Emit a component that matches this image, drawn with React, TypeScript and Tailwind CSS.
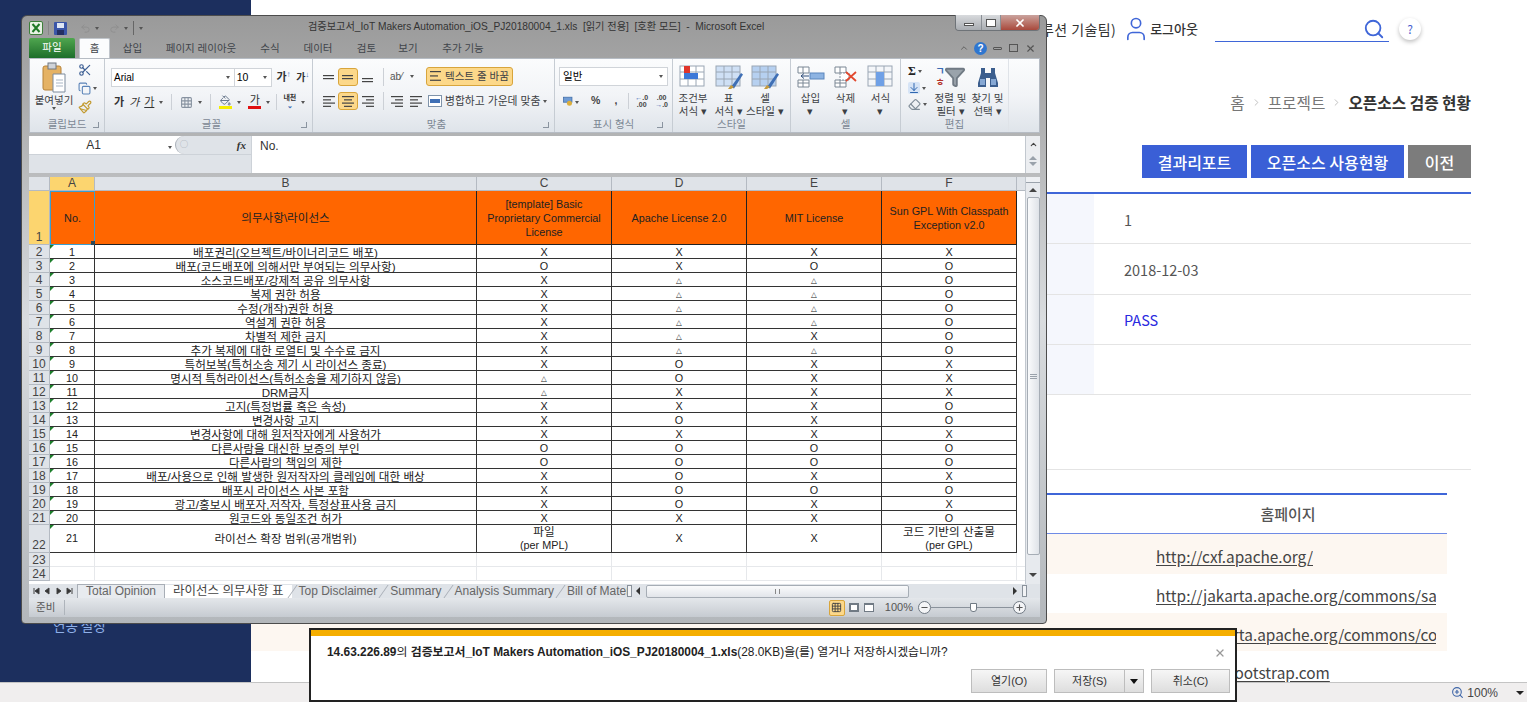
import { Search, User, Scissors, Copy, Paintbrush, PaintBucket, Grid3x3, Undo2, Redo2, ChevronUp, ChevronRight, X, Minus, Plus, Filter, Eraser, ArrowDownToLine, ZoomIn } from 'lucide-react';

const rows: [string, string, string, string, string][] = [
  ['배포권리(오브젝트/바이너리코드 배포)', 'X', 'X', 'X', 'X'],
  ['배포(코드배포에 의해서만 부여되는 의무사항)', 'O', 'X', 'O', 'O'],
  ['소스코드배포/강제적 공유 의무사항', 'X', '△', '△', 'O'],
  ['복제 권한 허용', 'X', '△', '△', 'O'],
  ['수정(개작)권한 허용', 'X', '△', '△', 'O'],
  ['역설계 권한 허용', 'X', '△', '△', 'O'],
  ['차별적 제한 금지', 'X', '△', 'X', 'O'],
  ['추가 복제에 대한 로열티 및 수수료 금지', 'X', '△', '△', 'O'],
  ['특허보복(특허소송 제기 시 라이선스 종료)', 'X', 'O', 'X', 'X'],
  ['명시적 특허라이선스(특허소송을 제기하지 않음)', '△', 'O', 'X', 'X'],
  ['DRM금지', '△', 'X', 'X', 'X'],
  ['고지(특정법률 혹은 속성)', 'X', 'X', 'X', 'O'],
  ['변경사항 고지', 'X', 'O', 'X', 'O'],
  ['변경사항에 대해 원저작자에게 사용허가', 'X', 'X', 'X', 'X'],
  ['다른사람을 대신한 보증의 부인', 'O', 'O', 'O', 'O'],
  ['다른사람의 책임의 제한', 'O', 'O', 'O', 'O'],
  ['배포/사용으로 인해 발생한 원저작자의 클레임에 대한 배상', 'X', 'O', 'X', 'X'],
  ['배포시 라이선스 사본 포함', 'X', 'O', 'O', 'O'],
  ['광고/홍보시 배포자,저작자, 특정상표사용 금지', 'X', 'O', 'X', 'X'],
  ['원코드와 동일조건 허가', 'X', 'X', 'X', 'O'],
];

const ribbonTabs = [
  { label: '삽입', w: 'w-[45px]' },
  { label: '페이지 레이아웃', w: 'w-[92px]' },
  { label: '수식', w: 'w-[46px]' },
  { label: '데이터', w: 'w-[50px]' },
  { label: '검토', w: 'w-[47px]' },
  { label: '보기', w: 'w-[36px]' },
  { label: '추가 기능', w: 'w-[74px]' },
];

const links = [
  { url: 'http://cxf.apache.org/', bg: 'bg-[#fdf7f1]', h: 'h-[40px]' },
  { url: 'http://jakarta.apache.org/commons/sandbox/', bg: 'bg-white', h: 'h-[39px]' },
  { url: 'http://jakarta.apache.org/commons/compress/', bg: 'bg-[#fdf7f1]', h: 'h-[38px]' },
  { url: 'http://getbootstrap.com', bg: 'bg-white', h: 'h-[38px]' },
];

function Caret() {
  return <span className="inline-block h-0 w-0 border-x-[2.5px] border-t-[3px] border-x-transparent border-t-[#555]" />;
}

function Lines({ widths, align = 'left', h = 13 }: { widths: number[]; align?: 'left' | 'center' | 'right'; h?: number }) {
  const gap = h / widths.length;
  return (
    <svg width="14" height={h} viewBox={`0 0 14 ${h}`}>
      {widths.map((w, i) => {
        const x = align === 'left' ? 1 : align === 'right' ? 13 - w : 7 - w / 2;
        return <rect key={i} x={x} y={i * gap + 1} width={w} height="1.2" fill="#444" />;
      })}
    </svg>
  );
}

function SheetIcon({ tint, accent }: { tint: string; accent?: 'red' | 'brush' | 'sel' }) {
  return (
    <svg width="28" height="24" viewBox="0 0 28 24">
      <rect x="1" y="1" width="24" height="20" fill={tint} stroke="#9aa6b4" />
      <path d="M1 7h24M1 14h24M9 1v20M17 1v20" stroke="#9aa6b4" fill="none" />
      {accent === 'red' && <rect x="5" y="1" width="6" height="13" fill="#e0352b" />}
      {accent === 'red' && <rect x="5" y="8" width="14" height="6" fill="#3c78d8" />}
      {accent === 'brush' && <path d="M16 22l10-14 2 1.5-9 14z" fill="#3f6fb5" />}
      {accent === 'brush' && <path d="M13 24l3-4 3 2-3 2z" fill="#c49a3c" />}
      {accent === 'sel' && <rect x="9" y="7" width="8" height="14" fill="#6fa0e6" />}
    </svg>
  );
}

function InsertIcon() {
  return (
    <svg width="28" height="24" viewBox="0 0 28 24">
      <path d="M1 2h11v6H1zM1 15h11v7H1zM6 2v6M6 15v7M1 18h11" fill="#fff" stroke="#7a8794" />
      <rect x="13" y="8" width="14" height="6" fill="#8db3e2" stroke="#5b86bd" />
      <path d="M12 11H4m3-2.5L4 11l3 2.5" stroke="#33517c" fill="none" />
    </svg>
  );
}

function DeleteIcon() {
  return (
    <svg width="28" height="24" viewBox="0 0 28 24">
      <path d="M3 2h11v6H3zM3 15h11v7H3zM8 2v6M8 15v7M3 18h11" fill="#fff" stroke="#7a8794" />
      <rect x="8" y="8" width="9" height="7" fill="#fff" stroke="#8a94a0" strokeDasharray="2 1" />
      <path d="M14 7l10 9M24 7l-10 9" stroke="#e2492f" strokeWidth="1.8" />
    </svg>
  );
}

function Binoculars() {
  return (
    <svg width="24" height="24" viewBox="0 0 24 24">
      <path d="M5 3h4v5h6V3h4v5l3 10v4h-8v-9h-4v9H2v-4L5 8z" fill="#3b5e8e" />
      <path d="M4 14h5v6H4zM15 14h5v6h-5z" fill="#86a8d4" />
    </svg>
  );
}

function GroupLabel({ label, launcher = true }: { label: string; launcher?: boolean }) {
  return (
    <div className="relative mt-auto flex h-[14px] items-center justify-center text-[10.5px] text-[#7c8794]">
      {label}
      {launcher && <span className="absolute right-[5px] top-[4px] h-[6px] w-[6px] border-b border-r border-[#8a94a0]" />}
    </div>
  );
}

function BigButton({ icon, lines, w }: { icon: React.ReactNode; lines: string[]; w: string }) {
  return (
    <div className={`flex flex-col items-center ${w}`}>
      <div className="flex h-[30px] items-center">{icon}</div>
      <div className="text-center text-[10.5px] leading-[13px] text-[#3c3f44] whitespace-nowrap">
        {lines.map((l, i) => <div key={i}>{l}</div>)}
      </div>
    </div>
  );
}

function Ribbon() {
  return (
    <div className="flex h-[75px] border border-[#b6bcc4] bg-linear-to-b from-[#fbfcfd] via-[#f2f4f7] to-[#dfe4ea]">
      {/* clipboard */}
      <div className="flex w-[75px] flex-col border-r border-[#c6ccd3]">
        <div className="flex pt-[3px]">
          <div className="flex w-[48px] flex-col items-center">
            <svg width="24" height="32" viewBox="0 0 24 32">
              <rect x="1" y="4" width="18" height="24" rx="2" fill="#e5b264" stroke="#b68238" />
              <rect x="6" y="1" width="8" height="6" fill="#cfd3d8" stroke="#6f7780" />
              <path d="M11 12h12v18H11z" fill="#fff" stroke="#7c8b9c" />
              <path d="M14 18h7M14 21h7M14 24h7" stroke="#a9b6c5" />
            </svg>
            <div className="text-[10.5px] leading-[13px] text-[#3c3f44] whitespace-nowrap">붙여넣기</div>
            <Caret />
          </div>
          <div className="flex flex-col gap-[5px] pt-[1px]">
            <Scissors size={14} className="text-[#3d5f94]" />
            <div className="flex items-center gap-[2px]"><Copy size={13} className="text-[#5a83b8]" /><Caret /></div>
            <Paintbrush size={14} className="text-[#c29a2e]" />
          </div>
        </div>
        <GroupLabel label="클립보드" />
      </div>
      {/* font */}
      <div className="flex w-[208px] flex-col border-r border-[#c6ccd3] pl-[6px] pt-[9px]">
        <div className="flex items-center">
          <div className="flex h-[19px] w-[125px] items-center justify-between border border-[#d0d4d9] bg-white pl-[2px] pr-[4px] text-[10px]">Arial<Caret /></div>
          <div className="flex h-[19px] w-[38px] items-center justify-between border border-l-0 border-[#d0d4d9] bg-white pl-[2px] pr-[4px] text-[10.5px]">10<Caret /></div>
          <span className="ml-[4px] w-[20px] text-[11px] font-bold text-[#333]">가<sup className="text-[#3c6cb4]">↑</sup></span>
          <span className="w-[16px] text-[10px] font-bold text-[#333]">가<sup className="text-[#3c6cb4]">↓</sup></span>
        </div>
        <div className="mt-[7px] flex items-center gap-[5px] pl-[3px] text-[11px] text-[#333]">
          <span className="font-bold">가</span>
          <span className="italic">가</span>
          <span className="underline">가</span><Caret />
          <span className="mx-[3px] h-[16px] border-l border-[#ccd0d6]" />
          <Grid3x3 size={13} className="text-[#8792a0]" /><Caret />
          <span className="mx-[3px] h-[16px] border-l border-[#ccd0d6]" />
          <div className="flex flex-col items-center"><PaintBucket size={11} className="text-[#5d6d82]" /><span className="h-[3px] w-[13px] bg-[#f6ee00]" /></div><Caret />
          <div className="ml-[2px] flex flex-col items-center leading-[11px]"><span>가</span><span className="h-[3px] w-[13px] bg-[#e01010]" /></div><Caret />
          <span className="mx-[1px] h-[16px] border-l border-[#ccd0d6]" />
          <span className="text-center text-[7px] leading-[8px] font-bold">내천<br /><span className="text-[#3c6cb4]">⌄</span></span><Caret />
        </div>
        <GroupLabel label="글꼴" />
      </div>
      {/* alignment */}
      <div className="flex w-[242px] flex-col border-r border-[#c6ccd3] pl-[6px] pt-[8px]">
        <div className="flex items-center">
          <div className="flex h-[18px] w-[19px] items-center justify-center"><Lines widths={[11, 11]} h={6} /></div>
          <div className="flex h-[18px] w-[20px] items-center justify-center rounded-[3px] border border-[#d8a53c] bg-[#fcd88a]"><Lines widths={[11, 11]} h={6} /></div>
          <div className="flex h-[18px] w-[19px] items-center justify-center pt-[6px]"><Lines widths={[11, 11]} h={6} /></div>
          <span className="mx-[6px] h-[18px] border-l border-[#ccd0d6]" />
          <span className="w-[20px] text-[10px] text-[#555]">ab⁄</span><Caret />
          <div className="ml-[12px] flex h-[19px] w-[87px] items-center gap-[2px] rounded-[3px] border border-[#d8a53c] bg-[#fcd88a] pl-[2px] text-[10.5px] whitespace-nowrap text-[#3c3f44]">
            <Lines widths={[11, 8, 11]} />텍스트 줄 바꿈
          </div>
        </div>
        <div className="mt-[6px] flex items-center">
          <div className="flex h-[18px] w-[19px] items-center justify-center"><Lines widths={[12, 8, 12, 8]} /></div>
          <div className="flex h-[18px] w-[20px] items-center justify-center rounded-[3px] border border-[#d8a53c] bg-[#fcd88a]"><Lines widths={[12, 8, 12, 8]} align="center" /></div>
          <div className="flex h-[18px] w-[19px] items-center justify-center"><Lines widths={[12, 8, 12, 8]} align="right" /></div>
          <span className="mx-[6px] h-[18px] border-l border-[#ccd0d6]" />
          <Lines widths={[12, 8, 12, 8]} align="right" />
          <span className="w-[5px]" />
          <Lines widths={[12, 8, 12, 8]} align="left" />
          <div className="ml-[5px] flex items-center gap-[3px] text-[10.8px] whitespace-nowrap text-[#3c3f44]">
            <svg width="14" height="12" viewBox="0 0 14 12"><rect x="0.5" y="0.5" width="13" height="11" fill="#fff" stroke="#7f93aa" /><rect x="2" y="4" width="10" height="4" fill="#3f6fb5" /></svg>
            병합하고 가운데 맞춤 <Caret />
          </div>
        </div>
        <GroupLabel label="맞춤" />
      </div>
      {/* number */}
      <div className="flex w-[118px] flex-col border-r border-[#c6ccd3] px-[4px] pt-[8px]">
        <div className="flex h-[19px] items-center justify-between border border-[#d0d4d9] bg-white pl-[3px] pr-[4px] text-[10.5px]">일반<Caret /></div>
        <div className="mt-[7px] flex items-center pl-[4px] text-[10.5px] font-bold text-[#444]">
          <svg width="14" height="13" viewBox="0 0 14 13"><rect x="0.5" y="0.5" width="12" height="7" fill="#6f9bd4" stroke="#3d6aa5" /><circle cx="9" cy="9" r="3.5" fill="#dcae3c" /></svg>
          <span className="ml-[2px]"><Caret /></span>
          <span className="ml-[12px]">%</span>
          <span className="ml-[14px]">,</span>
          <span className="ml-[11px] h-[16px] border-l border-[#ccd0d6]" />
          <span className="ml-[6px] text-center text-[7px] leading-[7px]"><span className="text-[#3c6cb4]">←</span>.0<br />.00</span>
          <span className="ml-[7px] text-center text-[7px] leading-[7px]">.00<br /><span className="text-[#3c6cb4]">→</span>.0</span>
        </div>
        <GroupLabel label="표시 형식" />
      </div>
      {/* style */}
      <div className="flex w-[118px] flex-col border-r border-[#c6ccd3] pt-[3px]">
        <div className="flex pl-[2px]">
          <BigButton w="w-[36px]" icon={<SheetIcon tint="#fff" accent="red" />} lines={['조건부', '서식 ▾']} />
          <BigButton w="w-[35px]" icon={<SheetIcon tint="#cfe0f5" accent="brush" />} lines={['표', '서식 ▾']} />
          <BigButton w="w-[38px]" icon={<SheetIcon tint="#b6d0f0" accent="brush" />} lines={['셀', '스타일 ▾']} />
        </div>
        <GroupLabel label="스타일" launcher={false} />
      </div>
      {/* cells */}
      <div className="flex w-[110px] flex-col border-r border-[#c6ccd3] pt-[3px]">
        <div className="flex justify-center">
          <BigButton w="w-[35px]" icon={<InsertIcon />} lines={['삽입', '▾']} />
          <BigButton w="w-[35px]" icon={<DeleteIcon />} lines={['삭제', '▾']} />
          <BigButton w="w-[35px]" icon={<SheetIcon tint="#f4f6f9" accent="sel" />} lines={['서식', '▾']} />
        </div>
        <GroupLabel label="셀" launcher={false} />
      </div>
      {/* editing */}
      <div className="flex w-[108px] flex-col border-r border-[#dfe3e8] pt-[3px]">
        <div className="flex pl-[7px]">
          <div className="flex w-[24px] flex-col gap-[4px] pt-[2px] text-[#222]">
            <div className="flex items-center gap-[2px] font-['Liberation_Serif',serif] text-[12px] leading-[14px] font-bold">Σ<Caret /></div>
            <div className="flex items-center gap-[2px]"><ArrowDownToLine size={12} className="rounded-[2px] bg-[#d6e4f6] text-[#2e66b0]" /><Caret /></div>
            <div className="flex items-center gap-[2px]"><Eraser size={13} className="text-[#7d8a96]" /><Caret /></div>
          </div>
          <BigButton w="w-[37px]" icon={<div className="flex items-center"><span className="text-[10px] leading-[11px] font-bold"><span className="text-[#3c6cb4]">ㄱ</span><br /><span className="text-[#b3322a]">ㅎ</span></span><Filter size={22} fill="#9aa3ab" className="-ml-[1px] text-[#707a84]" /></div>} lines={['정렬 및', '필터 ▾']} />
          <BigButton w="w-[37px]" icon={<Binoculars />} lines={['찾기 및', '선택 ▾']} />
        </div>
        <GroupLabel label="편집" launcher={false} />
      </div>
    </div>
  );
}

function GreenMark() {
  return <span className="absolute left-0 top-0 h-0 w-0 border-r-[4px] border-t-[4px] border-r-transparent border-t-[#1c7f2b]" />;
}

function Mark({ v }: { v: string }) {
  if (v === '△') return <span className="block h-[11px] overflow-hidden font-['DejaVu_Sans',sans-serif] text-[7.5px] leading-[12px] font-bold text-[#222]">{v}</span>;
  return <>{v}</>;
}

function Sheet() {
  const cols = ['A', 'B', 'C', 'D', 'E', 'F'];
  return (
    <div className="flex h-[407px]">
      <div className="w-[996px] overflow-hidden bg-white">
        <table className="w-[996px] table-fixed border-separate border-spacing-0 text-center text-[10.8px] text-[#222]">
          <colgroup>
            <col className="w-[21px]" /><col className="w-[45px]" /><col className="w-[382px]" />
            <col className="w-[135px]" /><col className="w-[135px]" /><col className="w-[135px]" /><col className="w-[135px]" /><col className="w-[8px]" />
          </colgroup>
          <thead>
            <tr className="h-[14px] text-[12px] leading-[13px] text-[#444]">
              <th className="border-b border-r border-[#b4bac2] bg-[#dfe3e8] p-0" />
              {cols.map(c => (
                <th key={c} className={`border-b border-r border-[#b4bac2] p-0 font-normal ${c === 'A' ? 'bg-[#fcd56f]' : 'bg-[#dfe3e8]'}`}>{c}</th>
              ))}
              <th className="border-b border-[#b4bac2] bg-[#dfe3e8] p-0" />
            </tr>
          </thead>
          <tbody>
            <tr className="h-[54px] leading-[14px]">
              <td className="border-b border-r border-[#b4bac2] bg-[#fcd56f] p-0 align-bottom text-[12px] text-[#444]">1</td>
              <td className="relative border border-[#3a9fd0] bg-[#ff6600] p-0">
                No.
                <span className="absolute bottom-[-1px] right-[-1px] h-[4px] w-[4px] bg-[#2a4a5a]" />
              </td>
              <td className="border-b border-r border-[#222] bg-[#ff6600] p-0 text-[11.6px]">의무사항\라이선스</td>
              <td className="border-b border-r border-[#222] bg-[#ff6600] p-0">[template] Basic<br />Proprietary Commercial<br />License</td>
              <td className="border-b border-r border-[#222] bg-[#ff6600] p-0">Apache License 2.0</td>
              <td className="border-b border-r border-[#222] bg-[#ff6600] p-0">MIT License</td>
              <td className="border-b border-r border-[#222] bg-[#ff6600] p-0">Sun GPL With Classpath<br />Exception v2.0</td>
              <td />
            </tr>
            {rows.map((r, i) => (
              <tr key={i} className="h-[14px] leading-[11px]">
                <td className="border-b border-r border-[#b4bac2] bg-[#dfe3e8] p-0 text-[12px] leading-[12px] text-[#444]">{i + 2}</td>
                <td className="relative border-b border-r border-[#333] p-0 pt-[1px]">
                  <GreenMark />
                  {i + 1}
                </td>
                <td className="border-b border-r border-[#333] p-0 pt-[1px] text-[11.6px] whitespace-nowrap">{r[0]}</td>
                {r.slice(1).map((v, j) => (
                  <td key={j} className="border-b border-r border-[#333] p-0 pt-[1px]"><Mark v={v} /></td>
                ))}
                <td />
              </tr>
            ))}
            <tr className="h-[28px] leading-[13px]">
              <td className="border-b border-r border-[#b4bac2] bg-[#dfe3e8] p-0 align-bottom text-[12px] text-[#444]">22</td>
              <td className="relative border-b border-r border-[#333] p-0">
                <GreenMark />
                21
              </td>
              <td className="border-b border-r border-[#333] p-0 text-[11.6px]">라이선스 확장 범위(공개범위)</td>
              <td className="border-b border-r border-[#333] p-0"><span className="text-[11.6px]">파일</span><br />(per MPL)</td>
              <td className="border-b border-r border-[#333] p-0">X</td>
              <td className="border-b border-r border-[#333] p-0">X</td>
              <td className="border-b border-r border-[#333] p-0"><span className="text-[11.6px]">코드 기반의 산출물</span><br />(per GPL)</td>
              <td />
            </tr>
            {[23, 24].map(n => (
              <tr key={n} className="h-[14px] leading-[12px]">
                <td className="border-b border-r border-[#b4bac2] bg-[#dfe3e8] p-0 text-[12px] text-[#444]">{n}</td>
                {[0, 1, 2, 3, 4, 5].map(j => <td key={j} className="border-b border-r border-[#e6e8eb] p-0" />)}
                <td className="border-b border-[#e6e8eb]" />
              </tr>
            ))}
          </tbody>
        </table>
      </div>
      {/* vertical scrollbar */}
      <div className="flex w-[15px] flex-col items-center border-l border-[#c2c8cf] bg-[#e7eaee]">
        <div className="h-[6px] w-full border-b border-[#9aa2ab] bg-[#eef0f3]" />
        <div className="flex h-[14px] items-center"><span className="h-0 w-0 border-x-[4px] border-b-[4px] border-x-transparent border-b-[#444]" /></div>
        <div className="flex h-[358px] w-[13px] flex-col items-center justify-center gap-[1px] rounded-[2px] border border-[#a6adb5] bg-linear-to-r from-[#fafbfc] to-[#dfe3e8]">
          <span className="w-[7px] border-t border-[#9aa2ab]" /><span className="w-[7px] border-t border-[#9aa2ab]" /><span className="w-[7px] border-t border-[#9aa2ab]" />
        </div>
        <div className="mt-auto flex h-[14px] items-center pb-[4px]"><span className="h-0 w-0 border-x-[4px] border-t-[4px] border-x-transparent border-t-[#444]" /></div>
      </div>
    </div>
  );
}

function TabSlant() {
  return <span className="h-[13px] w-0 shrink-0 skew-x-[-35deg] border-l border-[#a8aeb6]" />;
}

function SheetTabs() {
  return (
    <div className="flex h-[14px] items-end bg-[#dfe3e8] text-[12px] leading-[13px] text-[#666]">
      <svg width="48" height="10" viewBox="0 0 48 10" className="shrink-0 self-center">
        <path d="M5 2v6M10 2L6 5l4 3zM20 2l-4 3 4 3zM28 2l4 3-4 3zM38 2l4 3-4 3zM43 2v6" stroke="#444" fill="#333" />
      </svg>
      <div className="flex w-[550px] items-end overflow-hidden whitespace-nowrap">
        <span className="border border-b-0 border-[#a8aeb6] bg-[#e8ebef] px-[8px]">Total Opinion</span>
        <span className="bg-white px-[8px] text-[12.5px] text-[#444]">라이선스 의무사항 표</span>
        <TabSlant />
        <span className="px-[6px]">Top Disclaimer</span>
        <TabSlant />
        <span className="px-[6px]">Summary</span>
        <TabSlant />
        <span className="px-[6px]">Analysis Summary</span>
        <TabSlant />
        <span className="pl-[6px]">Bill of Materials</span>
      </div>
      <span className="h-[12px] w-[5px] self-center border border-[#8a929b] bg-[#f2f3f5]" />
      {/* horizontal scrollbar */}
      <div className="ml-[4px] flex flex-1 items-center self-center pr-[13px]">
        <span className="h-0 w-0 border-y-[4px] border-r-[4px] border-y-transparent border-r-[#333]" />
        <div className="ml-[6px] flex h-[13px] w-[263px] items-center justify-center rounded-[2px] border border-[#a6adb5] bg-linear-to-b from-[#fafbfc] to-[#e2e5ea]">
          <span className="h-[5px] w-[5px] border-x border-[#888]" />
        </div>
        <span className="ml-auto h-0 w-0 border-y-[4px] border-l-[4px] border-y-transparent border-l-[#333]" />
        <span className="ml-[5px] h-[12px] w-[5px] border border-[#8a929b] bg-[#f2f3f5]" />
      </div>
    </div>
  );
}

function StatusBar() {
  return (
    <div className="flex h-[19px] items-center bg-linear-to-b from-[#e4e7eb] to-[#c6cbd1] text-[10.5px] text-[#555]">
      <span className="border-r border-[#aeb4bb] pl-[7px] pr-[9px]">준비</span>
      <div className="ml-auto flex items-center">
        <div className="flex h-[16px] w-[16px] items-center justify-center rounded-[2px] border border-[#d8a53c] bg-[#fcd88a]"><Grid3x3 size={11} className="text-[#444]" /></div>
        <div className="ml-[2px] flex h-[16px] w-[14px] items-center justify-center"><span className="h-[9px] w-[10px] border-2 border-[#707a84] bg-white" /></div>
        <div className="ml-[1px] flex h-[16px] w-[14px] items-center justify-center"><span className="h-[9px] w-[10px] border border-t-2 border-[#707a84] bg-white" /></div>
        <span className="ml-[9px] font-['Liberation_Sans',sans-serif] text-[11px]">100%</span>
        <span className="ml-[5px] flex h-[13px] w-[13px] items-center justify-center rounded-full border border-[#707a84] bg-[#f4f5f7]"><Minus size={9} strokeWidth={3} /></span>
        <div className="relative flex w-[82px] items-center">
          <span className="w-full border-t border-[#8a929b]" />
          <span className="absolute left-[39px] top-[-4px] h-[9px] w-[7px] rounded-b-[3px] border border-[#707a84] bg-white" />
        </div>
        <span className="flex h-[13px] w-[13px] items-center justify-center rounded-full border border-[#707a84] bg-[#f4f5f7]"><Plus size={9} strokeWidth={3} /></span>
        <span className="w-[14px]" />
      </div>
    </div>
  );
}

function ExcelWindow() {
  return (
    <div className="absolute left-[21px] top-[15px] flex h-[609px] w-[1026px] flex-col rounded-t-[6px] rounded-b-[4px] border border-[#4c4c4c] bg-linear-to-b from-[#9a9a9a] via-[#d9dcdf] to-[#b3b7bb] pl-[7px] pr-[6px] font-['Liberation_Sans','Noto_Sans_CJK_KR',sans-serif]">
      {/* title bar */}
      <div className="relative flex h-[22px] items-center">
        <div className="flex items-center gap-[4px] pt-[2px]">
          <svg width="14" height="14" viewBox="0 0 14 14"><rect x="0.5" y="0.5" width="13" height="13" rx="1.5" fill="#e8f3e4" stroke="#3d7f3a" /><path d="M3.5 3l7 8M10.5 3l-7 8" stroke="#1f7a26" strokeWidth="2" /></svg>
          <span className="mx-[1px] h-[14px] border-l border-[#888]" />
          <svg width="13" height="13" viewBox="0 0 13 13"><rect width="13" height="13" rx="1" fill="#3a55a8" /><rect x="3" y="1" width="7" height="5" fill="#dfe6f4" /><rect x="3" y="8" width="7" height="5" fill="#242f63" /></svg>
          <Undo2 size={11} className="ml-[9px] text-[#8e8e8e]" /><Caret />
          <Redo2 size={11} className="ml-[6px] text-[#8e8e8e]" /><Caret />
          <span className="mx-[1px] h-[14px] border-l border-[#666]" />
          <Caret />
        </div>
        <div className="absolute left-[279px] top-[4px] text-[10.2px] leading-[14px] whitespace-pre text-[#333]">검증보고서_IoT Makers Automation_iOS_PJ20180004_1.xls  [읽기 전용]  [호환 모드]  -  Microsoft Excel</div>
        <div className="absolute right-0 top-[-1px] flex h-[16px] overflow-hidden rounded-b-[4px] border border-t-0 border-[#6e7378]">
          <span className="flex w-[25px] items-end justify-center bg-linear-to-b from-[#d8dadd] to-[#a9adb2] pb-[4px]"><span className="h-[3px] w-[10px] border border-[#555] bg-white" /></span>
          <span className="flex w-[20px] items-center justify-center border-x border-[#8b9096] bg-linear-to-b from-[#d8dadd] to-[#a9adb2]"><span className="h-[8px] w-[10px] border border-[#555] bg-white" /></span>
          <span className="flex w-[38px] items-center justify-center bg-linear-to-b from-[#c9a39e] to-[#a8483c]"><X size={12} strokeWidth={3.5} className="text-white" /></span>
        </div>
      </div>
      {/* ribbon tabs */}
      <div className="flex h-[20px] items-end text-[10.5px] text-[#3f444a]">
        <div className="flex h-[20px] w-[46px] items-center justify-center rounded-t-[2px] bg-linear-to-b from-[#4fa64f] to-[#1c6e2a] text-white">파일</div>
        <div className="ml-[4px] flex h-[20px] w-[31px] items-center justify-center rounded-t-[2px] border border-b-0 border-[#c0c5cb] bg-[#fbfcfd]">홈</div>
        {ribbonTabs.map(t => (
          <div key={t.label} className={`flex h-[20px] items-center justify-center whitespace-nowrap pt-[1px] ${t.w}`}>{t.label}</div>
        ))}
        <div className="ml-auto mr-[4px] flex h-[20px] items-center gap-[5px] text-[#555]">
          <ChevronUp size={10} />
          <span className="flex h-[13px] w-[13px] items-center justify-center rounded-full bg-[#2f76cf] text-[10px] font-bold text-white">?</span>
          <span className="ml-[1px] h-[3px] w-[9px] rounded-[1px] border border-[#555]" />
          <span className="ml-[2px] h-[8px] w-[9px] border border-[#555]" />
          <X size={11} strokeWidth={2.5} className="ml-[2px]" />
        </div>
      </div>
      <Ribbon />
      {/* formula bar */}
      <div className="mt-[3px] flex h-[37px] bg-white text-[#333]">
        <div className="w-[222px]">
          <div className="flex h-[19px] border-b border-[#cdd2d8]">
            <div className="flex w-[146px] items-center text-[12px]">
              <span className="flex-1 pr-[10px] text-center">A1</span><span className="mr-[3px]"><Caret /></span>
            </div>
            <div className="flex flex-1 items-center justify-between rounded-l-[10px] border-l border-[#aab0b8] bg-[#dfe3e8] pl-[4px] pr-[5px]">
              <span className="text-[8px] text-[#99a0a8]">◯</span>
              <span className="font-['Liberation_Serif',serif] text-[11px] font-bold italic text-[#333]">fx</span>
            </div>
          </div>
          <div className="h-[18px] bg-[#dfe3e8]" />
        </div>
        <div className="flex-1 border-l border-[#cdd2d8] pl-[8px] pt-[1px] text-[12px]">No.</div>
        <div className="flex w-[15px] flex-col items-center border-l border-[#c2c8cf] bg-[#eceef1] text-[#444]">
          <ChevronUp size={9} strokeWidth={3} className="mt-[4px]" />
          <span className="mt-[7px] h-0 w-0 border-x-[4px] border-b-[4px] border-x-transparent border-b-[#9aa2ab]" />
          <span className="mt-[2px] h-0 w-0 border-x-[4px] border-t-[4px] border-x-transparent border-t-[#9aa2ab]" />
        </div>
      </div>
      <div className="mt-[4px]"><Sheet /></div>
      <SheetTabs />
      <StatusBar />
    </div>
  );
}

function DownloadBar() {
  const btn = 'flex h-[24px] items-center justify-center border border-[#bdbdbd] bg-linear-to-b from-[#f6f6f6] to-[#dedede] text-[11px] text-[#333]';
  return (
    <div className="absolute left-[309px] top-[628px] h-[74px] w-[928px] border-2 border-[#222] bg-white font-['Liberation_Sans','Noto_Sans_CJK_KR',sans-serif]">
      <div className="h-[6px] bg-[#f5ae00]" />
      <div className="flex h-[33px] items-center justify-between pl-[16px] pr-[9px]">
        <div className="pt-[1px] text-[11.9px] whitespace-nowrap text-[#222]">
          <span className="font-bold">14.63.226.89</span>의 <span className="font-bold">검증보고서_IoT Makers Automation_iOS_PJ20180004_1.xls</span>(28.0KB)을(를) 열거나 저장하시겠습니까?
        </div>
        <X size={12} strokeWidth={2.5} className="text-[#999]" />
      </div>
      <div className="flex justify-end gap-[7px] pr-[5px]">
        <div className={`${btn} w-[76px]`}>열기(O)</div>
        <div className="flex">
          <div className={`${btn} w-[71px]`}>저장(S)</div>
          <div className={`${btn} w-[19px] border-l-0`}><span className="h-0 w-0 border-x-[4px] border-t-[5px] border-x-transparent border-t-[#111]" /></div>
        </div>
        <div className={`${btn} w-[79px]`}>취소(C)</div>
      </div>
    </div>
  );
}

function PageHeader() {
  return (
    <div className="flex h-[56px] shrink-0 items-center justify-end pr-[106px] pt-[2px] text-[#333]">
      <span className="text-[14px] tracking-[0.4px] whitespace-nowrap">(솔루션 기술팀)</span>
      <User size={28} strokeWidth={1.4} className="ml-[6px] text-[#3f66d8]" />
      <span className="text-[13px] font-medium">로그아웃</span>
      <div className="ml-[17px] flex h-[26px] w-[174px] items-center justify-end border-b border-[#3f66d8] pr-[4px]">
        <Search size={22} strokeWidth={2} className="text-[#3f66d8]" />
      </div>
      <span className="ml-[10px] flex h-[22px] w-[22px] items-center justify-center rounded-full bg-white text-[12px] text-[#4a5fd0] shadow-[0_2px_4px_rgba(0,0,0,0.25)]">?</span>
    </div>
  );
}

function PageBody() {
  return (
    <div className="flex h-[682px] flex-1 flex-col overflow-hidden font-['Noto_Sans_CJK_KR',sans-serif]">
      <PageHeader />
      <div className="flex h-[89px] shrink-0 items-center justify-end pr-[56px] pt-[4px] text-[15.7px]">
        <span className="text-[#777]">홈</span>
        <ChevronRight size={11} className="mx-[6px] text-[#bbb]" />
        <span className="text-[#777]">프로젝트</span>
        <ChevronRight size={11} className="mx-[6px] text-[#bbb]" />
        <span className="font-bold text-[#333]">오픈소스 검증 현황</span>
      </div>
      <div className="flex shrink-0 justify-end gap-[4px] pr-[56px] text-[16px] font-medium text-white">
        <div className="flex h-[33px] w-[105px] items-center justify-center bg-[#3a5fd6]">결과리포트</div>
        <div className="flex h-[33px] w-[153px] items-center justify-center bg-[#3a5fd6]">오픈소스 사용현황</div>
        <div className="flex h-[33px] w-[63px] items-center justify-center bg-[#7c7c7c]">이전</div>
      </div>
      <div className="mr-[56px] mt-[14px] shrink-0 border-t-2 border-[#3f66d8] text-[14.5px] text-[#555]">
        {['1', '2018-12-03', 'PASS', ''].map((v, i) => (
          <div key={i} className="flex h-[50.3px] border-b border-[#e4e4e4]">
            <div className="w-[843px] bg-[#f5f7fd]" />
            <div className={`flex items-center pl-[30px] pt-[2px] ${v === 'PASS' ? 'text-[#2a2ae0]' : ''}`}>{v}</div>
          </div>
        ))}
      </div>
      <div className="mr-[56px] h-[75px] shrink-0 border-b border-[#e4e4e4]" />
      <div className="mr-[80px] mt-[23px] shrink-0 border-t-2 border-[#3f66d8]">
        <div className="flex h-[39px] border-b border-[#6f8be6]">
          <div className="flex-1" />
          <div className="flex w-[318px] items-center justify-center text-[15px] font-medium text-[#555]">홈페이지</div>
        </div>
        {links.map(l => (
          <div key={l.url} className={`flex ${l.h} ${l.bg}`}>
            <div className="flex-1" />
            <div className="flex w-[318px] items-center pl-[27px] pr-[11px] pt-[3px]">
              <span className="overflow-hidden whitespace-nowrap text-[15.4px] leading-[22px] text-[#444] underline underline-offset-2">{l.url}</span>
            </div>
          </div>
        ))}
      </div>
    </div>
  );
}

export default function App() {
  return (
    <div className="relative h-[702px] w-[1527px] overflow-hidden bg-white">
      <div className="flex">
        <div className="h-[682px] w-[251px] bg-[#1c2f5e] pl-[53px] pt-[615px] font-['Noto_Sans_CJK_KR',sans-serif] text-[13.5px] text-[#8fb0e8]">연동 설정</div>
        <PageBody />
      </div>
      <div className="flex h-[20px] items-center justify-end border-t border-[#c4c4c4] bg-[#f0eeee] pr-[3px] font-['Liberation_Sans',sans-serif] text-[12px] text-[#444]">
        <ZoomIn size={13} className="text-[#3f66a8]" />
        <span className="ml-[3px]">100%</span>
        <span className="ml-[18px] h-0 w-0 border-x-[4px] border-t-[4px] border-x-transparent border-t-[#222]" />
      </div>
      <ExcelWindow />
      <DownloadBar />
    </div>
  );
}
